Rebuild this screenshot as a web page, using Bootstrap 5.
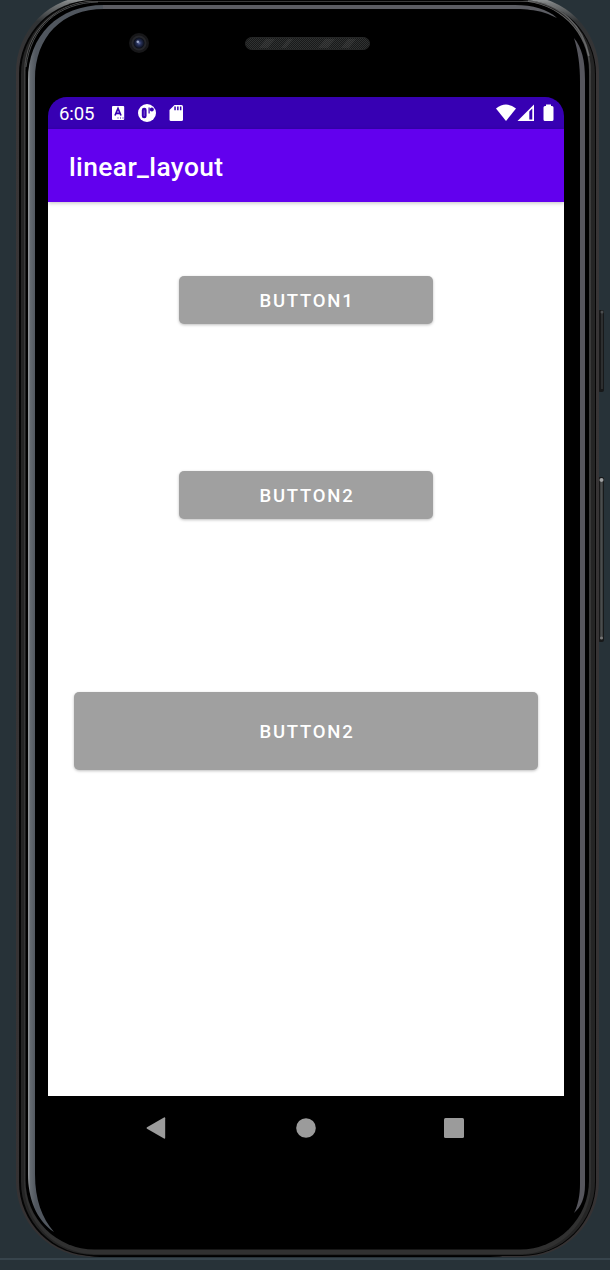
<!DOCTYPE html>
<html lang="en">
<head>
<meta charset="utf-8">
<meta name="viewport" content="width=device-width, initial-scale=1">
<title>linear_layout</title>
<link href="https://cdn.jsdelivr.net/npm/bootstrap@5.3.0/dist/css/bootstrap.min.css" rel="stylesheet">
<style>
body{background:#273238;font-family:Roboto,"Liberation Sans",sans-serif;overflow:hidden}
.stage{width:610px;height:1270px}
.shell{left:0;top:0;z-index:0}
.device{z-index:1;width:516px;margin-left:48px}
.forehead{height:97px;padding:32px 0 0 80px}
.speaker{margin:5px 0 0 95px}
.statusbar{height:31.5px;background:#3700b3;border-radius:19px 19px 0 0;padding:0 10px 0 11px}
.clock{font-size:18.6px;line-height:32px;width:53px;letter-spacing:-.15px;padding-top:2px}
.appbar{height:73.5px;background:#6200ee;padding:5px 0 0 21px;box-shadow:0 1px 4px rgba(0,0,0,.25);z-index:2}
.apptitle{font-size:26.4px;font-weight:500;letter-spacing:.38px}
.content{height:894px;padding:74px 26px 0}
.md-btn{background:#a0a0a0;color:#fff;border:0;border-radius:5px;font-size:18.5px;font-weight:500;letter-spacing:1.75px;line-height:1;padding:2px 0 0 2px;box-shadow:0 1px 3px rgba(0,0,0,.26);width:254px;height:48px}
.md-btn:hover{background:#a0a0a0;color:#fff}
.second{margin-top:146.5px;padding-top:3px}
.third{margin-top:173.5px;width:464px;height:77.5px}
.navkeys{height:63px;padding:0 100px 0 98px}
</style>
</head>
<body>
<div class="stage position-relative">
<svg class="shell position-absolute" width="610" height="1270" viewBox="0 0 610 1270" aria-hidden="true">
<defs>
<linearGradient id="rim" x1="0" y1="0" x2="0" y2="1"><stop offset="0" stop-color="#a5a9aa"/><stop offset=".006" stop-color="#777a7b"/><stop offset=".02" stop-color="#303335"/><stop offset=".06" stop-color="#393637"/><stop offset="1" stop-color="#353233"/></linearGradient>
<linearGradient id="inner" x1="0" y1="0" x2="0" y2="1"><stop offset="0" stop-color="#777"/><stop offset=".06" stop-color="#3d3d3d"/><stop offset="1" stop-color="#303030"/></linearGradient>
<linearGradient id="glass" x1="28" y1="0" x2="36" y2="0" gradientUnits="userSpaceOnUse"><stop offset="0" stop-color="#999c9f"/><stop offset=".3" stop-color="#656b71"/><stop offset="1" stop-color="#50565e"/></linearGradient>
<radialGradient id="lens"><stop offset="0" stop-color="#6674a5"/><stop offset=".35" stop-color="#29335d"/><stop offset=".8" stop-color="#12182c"/><stop offset="1" stop-color="#090b12"/></radialGradient>
</defs>
<path fill="#37444c" d="M0 1258h610v2H0z"/>
<g><rect x="598" y="310" width="6" height="82" rx="2" fill="#171819"/><path d="M602 313v76" stroke="#2d2f30" stroke-width="2"/><circle cx="602" cy="312" r="1.500" fill="#4b4e50"/>
<rect x="598" y="477" width="6" height="165" rx="2" fill="#171819"/><path d="M601.500 482v157" stroke="#4a4c4d" stroke-width="2.500"/><circle cx="601.500" cy="480" r="2" fill="#a0a2a3"/><circle cx="601.500" cy="638" r="1.500" fill="#777"/></g>
<rect x="16" y="-4" width="583" height="1261" rx="76" fill="url(#rim)"/>
<path fill="#000" d="M45 1200h520v10c-15 30-45 47-75 47H100c-30 0-50-20-55-57z"/>
<rect x="19" y="0" width="577" height="1256" rx="74" fill="#050505"/>
<rect x="21" y="1" width="574" height="1254" rx="73" fill="#252525"/>
<rect x="24" y="1" width="567" height="1253" rx="71" fill="url(#inner)"/>
<rect x="25.500" y="1.500" width="563.500" height="1248" rx="69" fill="#000"/>
<path fill="url(#glass)" d="M28 80C28 36 58 5 104 5V9C62 9 35 37 35 79V1174c0 26 7 44 19 58-18-12-26-34-26-58z"/>
<path fill="#5c5d63" d="M103 5H515c18 0 32 4 42 13-12-6-22-9-44-9H103z"/>
<path fill="#56565d" d="M574 38c8 10 11 22 11 42v1105c0 13-4 22-11 28 4-8 6-18 6-29V82c0-17-2-31-6-44z"/>
<path fill="none" stroke="#74787a" stroke-width="1" opacity=".65" d="M26 67C31 27 58 3 98 2"/>
<path fill="none" stroke="#8a8c8e" stroke-width="1.500" opacity=".6" d="M528 1c33 2 55 25 61 55"/>
</svg>
<main class="device position-relative">
<div class="forehead d-flex align-items-start">
<svg width="22" height="22" viewBox="0 0 22 22"><circle cx="11" cy="11" r="10" fill="#171719"/><circle cx="11" cy="11" r="7.500" fill="#25262b"/><circle cx="11" cy="11" r="5.500" fill="url(#lens)"/><circle cx="9.800" cy="9.800" r="1.300" fill="#9da9c9"/></svg>
<svg class="speaker" width="125" height="13" viewBox="0 0 125 13"><defs><pattern id="mesh" width="2" height="2" patternUnits="userSpaceOnUse"><path fill="#191a1a" d="M0 0h2v2H0z"/><path fill="#303232" d="M0 0h1v1H0zM1 1h1v1H1z"/></pattern></defs><rect x=".5" y=".5" width="124" height="12" rx="6" fill="url(#mesh)" stroke="#252626"/><path fill="#777" opacity=".14" d="M14 11l7-9h9l-7 9zM36 11l7-9h5l-7 9zM73 11l7-9h10l-7 9zM96 11l7-9h8l-7 9z"/></svg>
</div>
<header>
<div class="statusbar d-flex align-items-center text-white">
<span class="clock">6:05</span>
<svg width="72" height="20" viewBox="112 103 72 20"><path fill="#fff" d="M112 107q0-1 1-1h10.200q1 0 1 1v12q0 1-1 1H113q-1 0-1-1z"/><path fill="none" stroke="#3700b3" stroke-width="1.700" d="M115 115.500l3-7 3 7M116 113.300h4"/><path fill="#3700b3" d="M117.500 117.500h1v1h-1zm2.500 0h1v1h-1zm2.500 0h1v1h-1z"/>
<circle cx="147" cy="113" r="9" fill="#fff"/><rect x="141.800" y="107.800" width="4.800" height="10.400" rx="2.200" fill="#3700b3"/><path fill="#fff" opacity=".35" d="M143.700 110.200h1v5.800h-1z"/><path fill="#3700b3" d="M148.500 107.500h1.200v6h-1.200z"/><circle cx="151.800" cy="109.600" r="2" fill="#3700b3"/>
<g transform="translate(-.5 0)"><path fill="#fff" d="M175 105h7q1.500 0 1.500 1.500v13q0 1.500-1.500 1.500h-10.500q-1.500 0-1.500-1.500V110z"/><path fill="#3700b3" d="M174.800 106.500h1.500v3.800h-1.500zm2.800 0h1.500v3.800h-1.500zm2.800 0h1.500v3.800h-1.500z"/></g></svg>
<svg class="ms-auto" width="58" height="20" viewBox="496 103 58 20"><path fill="#fff" d="M496 108.500Q506 100.500 516 108.500L506 121z"/><path fill="#fff" fill-rule="evenodd" d="M517.500 121L534 104.500V121zM529.300 111.500v8h3v-11z"/><path fill="#fff" d="M546 104.500h5v1.500h1q1.500 0 1.500 1.500v12q0 1.500-1.500 1.500h-7q-1.500 0-1.500-1.500v-12q0-1.500 1.500-1.500h1z"/></svg>
</div>
<div class="appbar position-relative d-flex align-items-center text-white"><span class="apptitle">linear_layout</span></div>
</header>
<section class="content bg-white d-flex flex-column align-items-center">
<button type="button" class="btn md-btn">BUTTON1</button>
<button type="button" class="btn md-btn second">BUTTON2</button>
<button type="button" class="btn md-btn third">BUTTON2</button>
</section>
<nav class="navkeys bg-black d-flex justify-content-between align-items-center">
<svg width="20" height="22" viewBox="0 0 20 22"><path fill="#9b9b9b" d="M18 .5q1.200-.5 1.200.8v19.400q0 1.300-1.200.8L1 11.700q-1-.7 0-1.400z"/></svg>
<svg width="22" height="20" viewBox="0 0 22 20"><circle cx="12" cy="10" r="9.800" fill="#9b9b9b"/></svg>
<svg width="20" height="20" viewBox="0 0 20 20"><rect width="20" height="20" rx="1.500" fill="#9b9b9b"/></svg>
</nav>
</main>
</div>
<script src="https://cdn.jsdelivr.net/npm/bootstrap@5.3.0/dist/js/bootstrap.bundle.min.js"></script>
</body>
</html>
